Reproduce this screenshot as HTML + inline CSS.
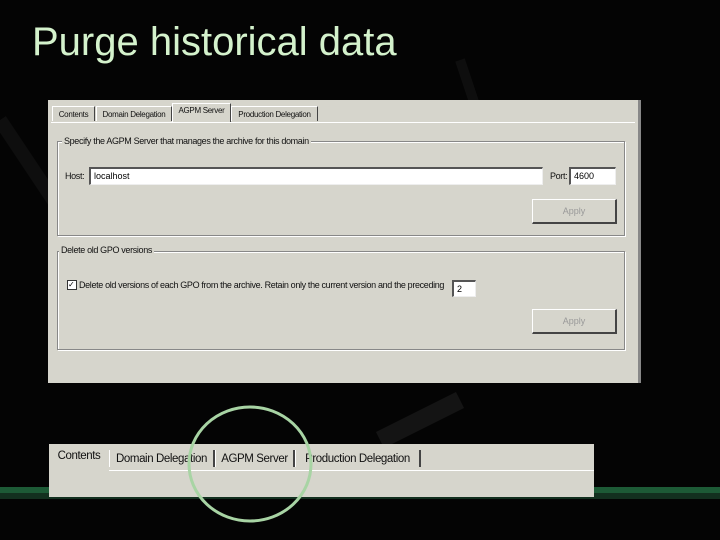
<!DOCTYPE html>
<html><head><meta charset="utf-8"><style>
body{margin:0;width:720px;height:540px;background:#040404;position:relative;overflow:hidden;font-family:"Liberation Sans",sans-serif}
.t{position:absolute;left:32px;top:20px;color:#d4f2cc;font-size:40px;letter-spacing:0}
.p{position:absolute;background:#d6d5cc}
.s{font-size:9px;color:#111;position:absolute;white-space:nowrap;letter-spacing:-0.35px}
.tab{position:absolute;top:6px;height:15px;border:1px solid #fff;border-right:1px solid #444;border-bottom:none;font-size:8px;line-height:15px;color:#111;background:#d3d2c9;text-align:center;overflow:hidden;white-space:nowrap;letter-spacing:-0.3px;box-sizing:border-box}
.grp{position:absolute;border:1px solid #888;box-shadow:1px 1px 0 #fff inset,1px 1px 0 #fff}
.inp{position:absolute;background:#fff;border-top:2px solid #555;border-left:2px solid #555;border-bottom:1px solid #eee;border-right:1px solid #eee;font-size:9px;line-height:14px;padding-left:3px}
.btn{position:absolute;width:82px;height:22px;border-top:1px solid #fff;border-left:1px solid #fff;border-right:2px solid #444;border-bottom:2px solid #444;font-size:9px;color:#999;text-align:center;line-height:22px}
.tab2{position:absolute;top:6px;height:17px;border-left:1px solid #fff;border-right:2px solid #444;font-size:11.5px;line-height:18px;color:#111;text-align:center;white-space:nowrap;letter-spacing:-0.4px;box-sizing:border-box}
</style></head><body>
<svg style="position:absolute;left:0;top:0" width="720" height="540">
<path d="M0 120 L80 240" stroke="#0e0e0e" stroke-width="14"/>
<path d="M460 60 L540 300" stroke="#0e0e0e" stroke-width="10"/>
<path d="M380 440 L460 400" stroke="#141414" stroke-width="18"/>
<rect x="0" y="487" width="720" height="6" fill="#1d5a36"/>
<rect x="0" y="493" width="720" height="6" fill="#13301f"/>
</svg>
<div class="t">Purge historical data</div>
<div class="p" style="left:48px;top:100px;width:590px;height:283px;border-right:3px solid #888">
 <div class="tab" style="left:4px;width:43px">Contents</div>
 <div class="tab" style="left:48px;width:76px">Domain Delegation</div>
 <div class="tab" style="left:124px;width:59px;top:3px;height:19px;background:#d6d5cc;line-height:14px">AGPM Server</div>
 <div class="tab" style="left:183px;width:87px">Production Delegation</div>
 <div style="position:absolute;left:3px;right:3px;top:22px;height:1px;background:#fff"></div>
 <div class="grp" style="left:9px;top:41px;width:566px;height:93px"></div>
 <div class="s" style="left:14px;top:36px;background:#d6d5cc;padding:0 2px">Specify the AGPM Server that manages the archive for this domain</div>
 <div class="s" style="left:17px;top:71px">Host:</div>
 <div class="inp" style="left:41px;top:67px;width:448px;height:15px">localhost</div>
 <div class="s" style="left:502px;top:71px">Port:</div>
 <div class="inp" style="left:521px;top:67px;width:41px;height:15px">4600</div>
 <div class="btn" style="left:484px;top:99px">Apply</div>
 <div class="grp" style="left:9px;top:151px;width:566px;height:97px"></div>
 <div class="s" style="left:11px;top:145px;background:#d6d5cc;padding:0 2px">Delete old GPO versions</div>
 <div style="position:absolute;left:19px;top:180px;width:8px;height:8px;background:#fff;border:1px solid #333;font-size:8px;line-height:8px">✓</div>
 <div class="s" style="left:31px;top:180px">Delete old versions of each GPO from the archive. Retain only the current version and the preceding</div>
 <div class="inp" style="left:404px;top:180px;width:18px;height:14px">2</div>
 <div class="btn" style="left:484px;top:209px">Apply</div>
</div>
<div class="p" style="left:49px;top:444px;width:545px;height:53px">
 <div class="tab2" style="left:2px;top:3px;width:56px;border-left:none;border-right:none">Contents</div>
 <div class="tab2" style="left:60px;width:106px">Domain Delegation</div>
 <div class="tab2" style="left:166px;width:80px">AGPM Server</div>
 <div class="tab2" style="left:246px;width:126px">Production Delegation</div>
 <div style="position:absolute;left:60px;right:0;top:26px;height:1px;background:#fff"></div>
</div>
<svg style="position:absolute;left:0;top:0" width="720" height="540">
<ellipse cx="250" cy="464" rx="61" ry="57" fill="none" stroke="#a8d4a4" stroke-width="3"/>
</svg>
</body></html>
